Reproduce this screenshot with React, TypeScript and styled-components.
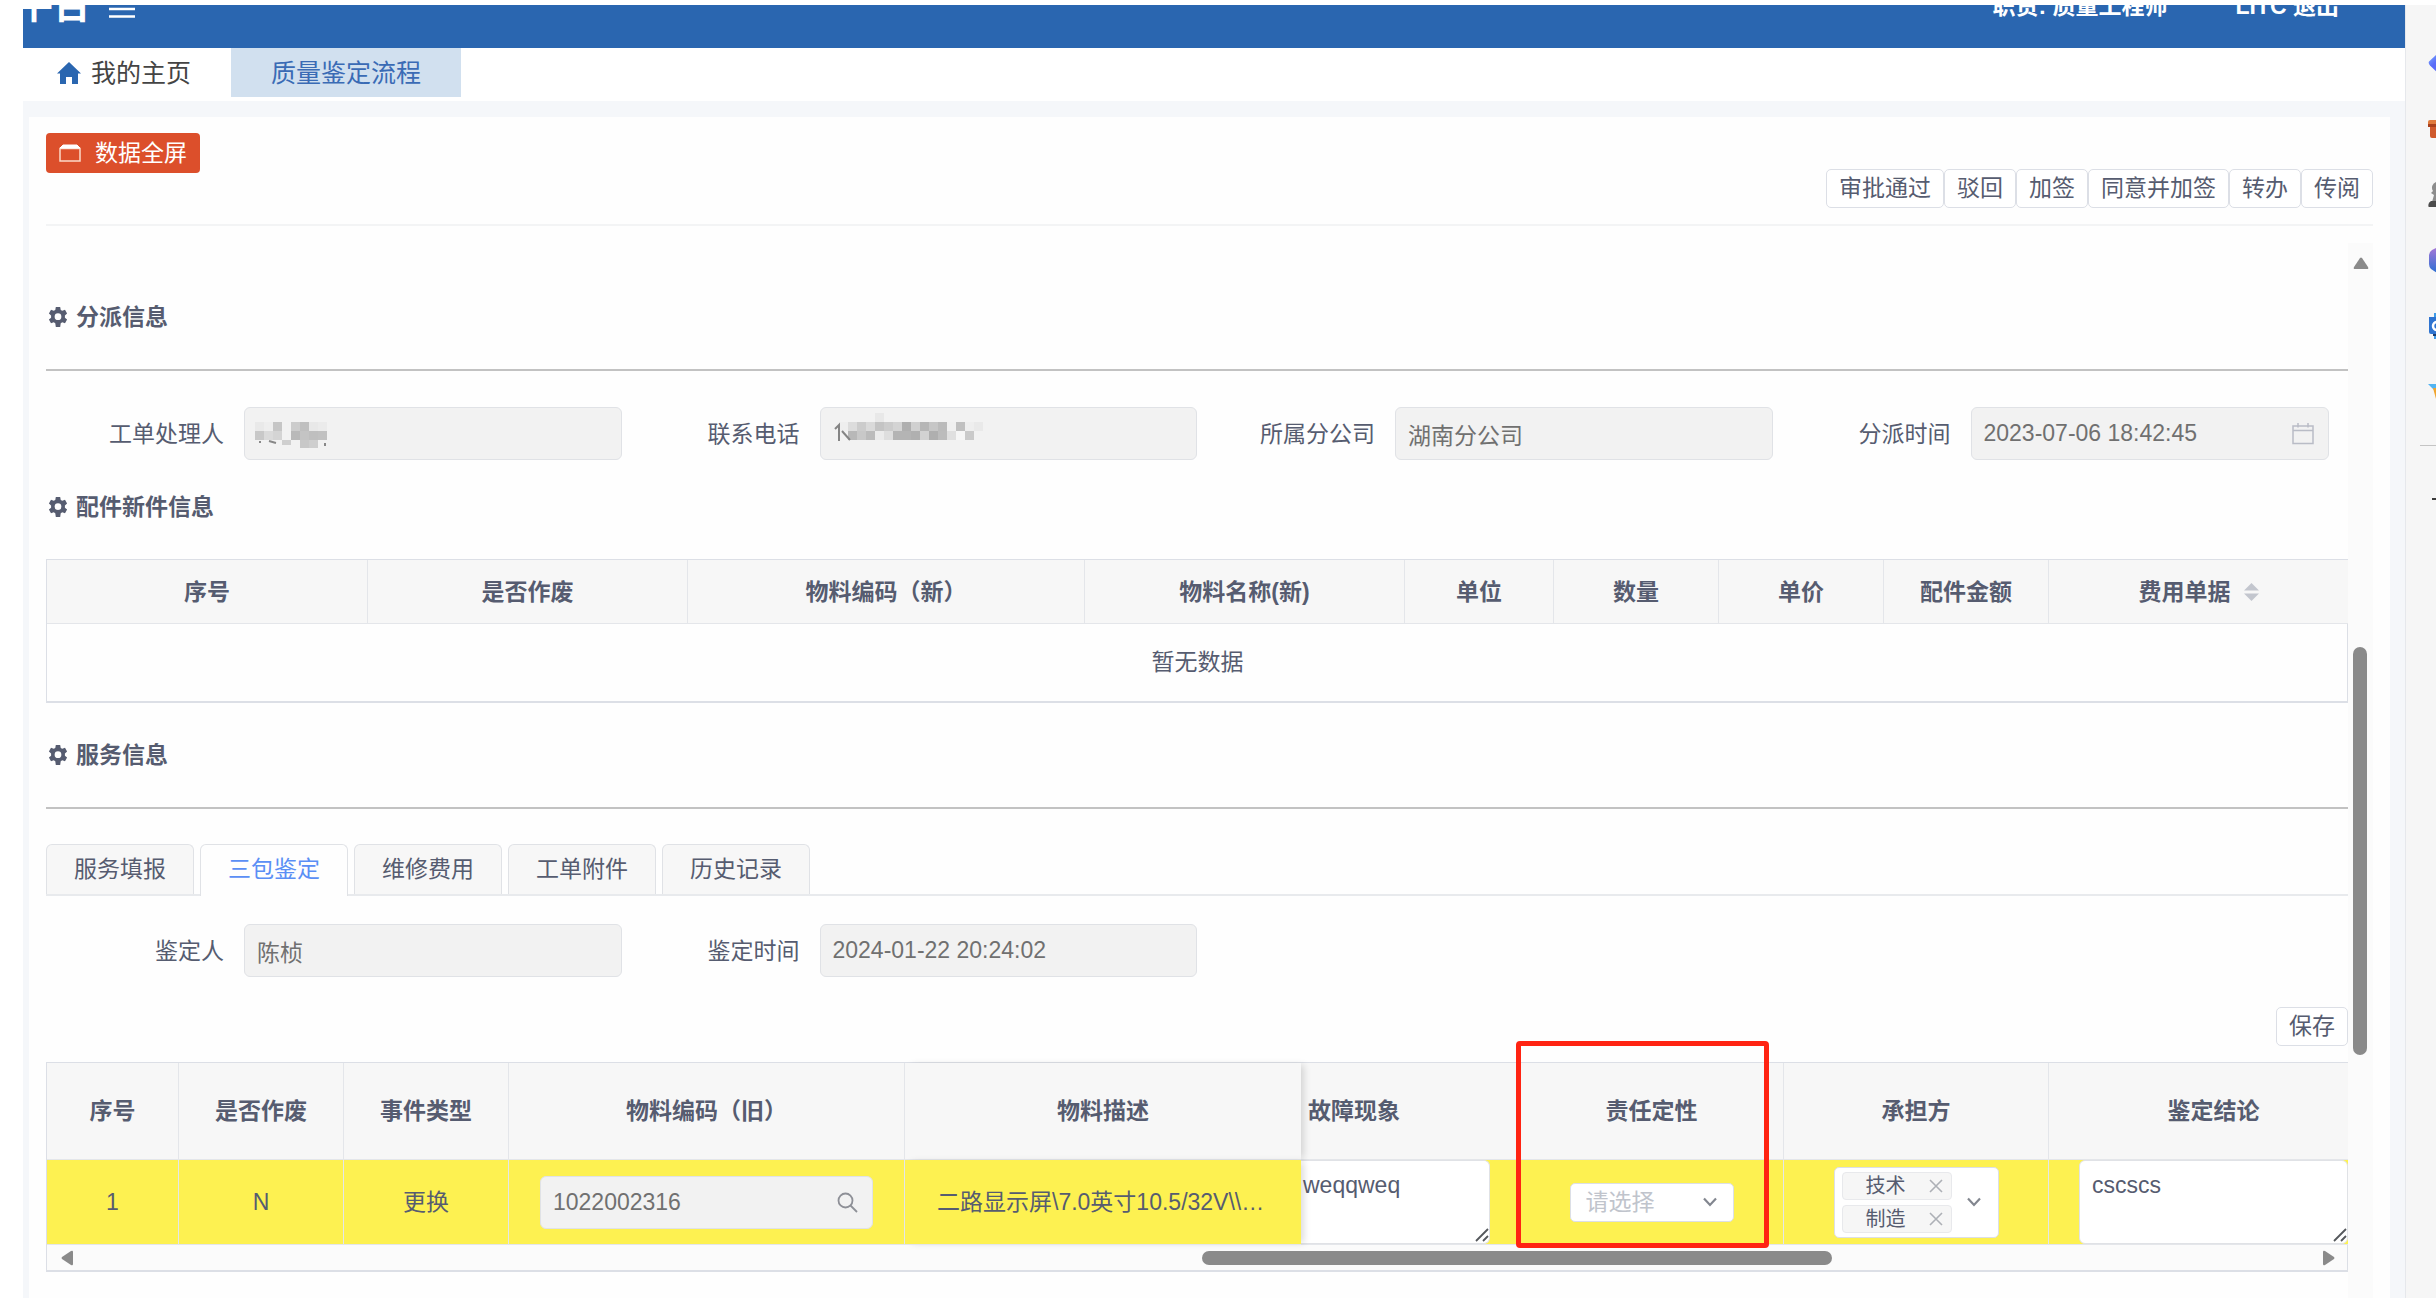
import React, { useState } from 'react';
import styled, { createGlobalStyle, css } from 'styled-components';

const ink = '#565c70';
const line = '#e4e6ea';
const yellow = '#fdf151';

const GlobalStyle = createGlobalStyle`
  * { box-sizing: border-box; }
  body {
    margin: 0;
    background: #fff;
    color: ${ink};
    font-family: "Liberation Sans", "Noto Sans CJK SC", sans-serif;
    font-size: 23px;
    line-height: 32px;
  }
  button, input, select, textarea { font: inherit; color: inherit; margin: 0; }
  button { cursor: pointer; }
`;

/* ---------- frame ---------- */

const Page = styled.div`
  display: flex;
  min-height: 100vh;
  padding: 5px 0 0 23px;
  overflow: hidden;
`;

const Main = styled.div`
  flex: 1;
  min-width: 0;
  display: flex;
  flex-direction: column;
  background: #f5f7fa;
`;

const TopBar = styled.header`
  display: flex;
  justify-content: space-between;
  align-items: flex-end;
  height: 43px;
  padding: 0 66px 20px 0;
  overflow: hidden;
  background: #2a66b0;
  color: #fff;
  font-weight: bold;
`;

const Brand = styled.div`
  display: flex;
  align-items: flex-end;
  gap: 18px;
  margin-left: -8px;
  font-size: 38px;
  line-height: 46px;
`;

const MenuButton = styled.button`
  display: flex;
  padding: 0 0 10px;
  border: 0;
  background: none;
`;

const Account = styled.div`
  display: flex;
  gap: 68px;
  padding-bottom: 6px;
`;

const LogoutLink = styled.a`
  color: #fff;
  text-decoration: none;
`;

const PageTabs = styled.nav`
  display: flex;
  height: 53px;
  padding-bottom: 4px;
  background: #fff;
  font-size: 25px;
`;

const PageTab = styled.a<{ $active?: boolean }>`
  display: flex;
  align-items: center;
  gap: 10px;
  padding: ${p => (p.$active ? '0 40px' : '0 40px 0 34px')};
  background: ${p => (p.$active ? '#d1e0ef' : 'transparent')};
  color: ${p => (p.$active ? '#3a6bb5' : '#444')};
  text-decoration: none;
`;

const Card = styled.main`
  flex: 1;
  margin: 16px 15px 0 6px;
  padding: 16px 17px 0;
  display: flex;
  flex-direction: column;
  background: #fefefe;
`;

const Toolbar = styled.div`
  display: flex;
  justify-content: space-between;
  min-height: 93px;
  padding-bottom: 16px;
  border-bottom: 2px solid #f3f4f5;
`;

const FullscreenButton = styled.button`
  display: flex;
  align-items: center;
  align-self: flex-start;
  gap: 14px;
  height: 40px;
  padding: 0 13px;
  border: 0;
  border-radius: 4px;
  background: #dc4f2b;
  color: #fff;
`;

const Actions = styled.div`
  display: flex;
  align-self: flex-end;
`;

const SmallButton = styled.button`
  height: 39px;
  padding: 0 12px;
  border: 1px solid #dcdfe6;
  border-radius: 5px;
  background: #fff;
  white-space: nowrap;
  line-height: 35px;
`;

/* ---------- scrolling body ---------- */

const Body = styled.div`
  flex: 1;
  display: flex;
  margin-top: 17px;
`;

const Content = styled.div`
  flex: 1;
  min-width: 0;
  padding-top: 58px;
`;

const Rail = styled.div`
  width: 25px;
  padding: 14px 0 0 5px;
  background: #fbfbfb;
`;

const RailThumb = styled.div`
  width: 14px;
  height: 408px;
  margin-top: 378px;
  border-radius: 7px;
  background: #8a8a8a;
`;

const Arrow = styled.svg`
  display: block;
  fill: #8a8a8a;
`;

const SectionTitle = styled.h2`
  display: flex;
  align-items: center;
  gap: 8px;
  margin: 0 0 36px;
  padding-left: 2px;
  font-size: 23px;
  line-height: 32px;
`;

const Rule = styled.hr`
  height: 2px;
  margin: 0;
  border: 0;
  background: #c2c2c2;
`;

const FormRow = styled.div<{ $top: number; $bottom: number }>`
  display: grid;
  grid-template-columns: repeat(4, 1fr);
  margin: ${p => p.$top}px 0 ${p => p.$bottom}px;
`;

const Field = styled.div<{ $inset?: boolean }>`
  display: flex;
  align-items: center;
  padding-right: ${p => (p.$inset ? 19 : 0)}px;
`;

const Label = styled.label`
  width: 198px;
  padding-right: 20px;
  text-align: right;
`;

const InputBox = styled.div`
  position: relative;
  flex: 1;
  min-width: 0;
  height: 53px;
`;

const TextInput = styled.input`
  width: 100%;
  height: 100%;
  padding: 0 12px;
  border: 1px solid #e0e2e6;
  border-radius: 6px;
  background: #f2f2f2;
  color: #707070;
  -webkit-text-fill-color: #707070;
`;

const InputIcon = styled.span`
  position: absolute;
  top: 0;
  bottom: 0;
  right: 15px;
  display: flex;
  align-items: center;
`;

const Mosaic = styled.svg`
  position: absolute;
  left: 10px;
  top: 6px;
`;

/* ---------- tables ---------- */

const TableFrame = styled.div<{ $bottom?: number }>`
  margin-bottom: ${p => p.$bottom || 0}px;
  border: 1px solid #dcdfe6;
  border-bottom-width: 2px;
`;

const Table = styled.table`
  width: 100%;
  table-layout: fixed;
  border-collapse: separate;
  border-spacing: 0;
`;

const cell = css`
  padding: 0;
  border-right: 1px solid ${line};
  border-bottom: 1px solid ${line};
  text-align: center;
  white-space: nowrap;
  &:last-child { border-right: 0; }
`;

const Th = styled.th<{ $tall?: boolean; $clipped?: 'left' | 'right'; $plain?: boolean; $shadow?: boolean }>`
  ${cell}
  position: relative;
  height: ${p => (p.$tall ? 97 : 64)}px;
  background: #f7f7f7;
  ${p => p.$clipped === 'left' && 'text-align: left; padding-left: 7px;'}
  ${p => p.$clipped === 'right' && 'padding-left: 30px;'}
  ${p => p.$plain && 'border-right: 0;'}
  ${p => p.$shadow && 'z-index: 1; box-shadow: 5px 0 7px -2px rgba(0, 0, 0, 0.14);'}
`;

const EmptyTd = styled.td`
  height: 77px;
  padding: 0 0 2px;
  text-align: center;
`;

const Td = styled.td<{ $plain?: boolean; $shadow?: boolean }>`
  ${cell}
  position: relative;
  height: 85px;
  background: ${yellow};
  ${p => p.$plain && 'border-right: 0;'}
  ${p => p.$shadow && 'z-index: 1; box-shadow: 5px 0 7px -2px rgba(0, 0, 0, 0.14);'}
`;

const ThInner = styled.span`
  display: inline-flex;
  align-items: center;
  gap: 13px;
`;

const Ellipsis = styled.div`
  padding: 0 32px;
  overflow: hidden;
  text-overflow: ellipsis;
`;

const CodeBox = styled(InputBox)`
  margin: 0 31px;
`;

const NoteBox = styled.div<{ $side: 'left' | 'right' }>`
  position: relative;
  height: 84px;
  margin: ${p => (p.$side === 'left' ? '0 30px 0 0' : '0 0 0 30px')};
`;

const NoteArea = styled.textarea<{ $side: 'left' | 'right' }>`
  display: block;
  width: 100%;
  height: 100%;
  padding: ${p => (p.$side === 'left' ? '8px 2px' : '8px 12px')};
  border: 1px solid #e0e2e6;
  border-left-width: ${p => (p.$side === 'left' ? 0 : 1)}px;
  border-radius: ${p => (p.$side === 'left' ? '0 6px 6px 0' : '6px')};
  background: #fff;
  overflow: hidden;
  resize: none;
`;

const Grip = styled.svg`
  position: absolute;
  right: 1px;
  bottom: 2px;
  pointer-events: none;
`;

const Highlight = styled.div`
  position: absolute;
  z-index: 3;
  left: -4px;
  top: -22px;
  width: 253px;
  height: 207px;
  border: 5px solid #ff2312;
  border-radius: 4px;
  pointer-events: none;
`;

const SelectBox = styled.div`
  position: relative;
  display: inline-flex;
  vertical-align: middle;
`;

const Select = styled.select`
  width: 164px;
  height: 39px;
  padding: 0 40px 0 15px;
  appearance: none;
  border: 1px solid #dcdfe6;
  border-radius: 5px;
  background: #fff;
  color: #c0c4cc;
  line-height: 33px;
`;

const SelectArrow = styled.span`
  position: absolute;
  right: 17px;
  top: 0;
  bottom: 0;
  display: flex;
  align-items: center;
  pointer-events: none;
`;

const TagBox = styled(SelectBox)`
  flex-direction: column;
  gap: 5px;
  width: 165px;
  padding: 4px 7px;
  border: 1px solid #dcdfe6;
  border-radius: 5px;
  background: #fff;
`;

const Tag = styled.span`
  display: flex;
  align-items: center;
  justify-content: space-between;
  width: 110px;
  height: 28px;
  padding: 0 8px 0 23px;
  border: 1px solid #e8e9ec;
  border-radius: 4px;
  background: #f6f6f6;
  font-size: 20px;
  line-height: 24px;
`;

const TagClose = styled.button`
  display: flex;
  padding: 0;
  border: 0;
  background: none;
`;

const HScroll = styled.div`
  display: flex;
  align-items: center;
  height: 25px;
  padding: 0 12px 0 14px;
  background: #fbfbfb;
`;

const HTrack = styled.div`
  flex: 1;
  display: grid;
  grid-template-columns: 1129fr 630fr 491fr;
`;

const HThumb = styled.div`
  grid-column: 2;
  height: 14px;
  border-radius: 7px;
  background: #8a8a8a;
`;

const SaveRow = styled.div`
  display: flex;
  justify-content: flex-end;
  margin-bottom: 16px;
`;

/* ---------- inner tabs ---------- */

const TabList = styled.div`
  display: flex;
  gap: 6px;
  height: 52px;
  margin-top: 35px;
  border-bottom: 2px solid #e8eaed;
`;

const Tab = styled.button<{ $active: boolean }>`
  height: ${p => (p.$active ? 52 : 50)}px;
  width: 148px;
  padding: 0 0 ${p => (p.$active ? 4 : 2)}px;
  border: 1px solid #e0e2e6;
  border-bottom: 0;
  border-radius: 6px 6px 0 0;
  background: ${p => (p.$active ? '#fefefe' : '#f7f7f7')};
  color: ${p => (p.$active ? '#5b8ff5' : ink)};
`;

/* ---------- browser side bar ---------- */

const SideBar = styled.aside`
  width: 31px;
  padding-top: 44px;
  display: flex;
  flex-direction: column;
  align-items: flex-start;
  gap: 40px;
  overflow: hidden;
  border-left: 1px solid #e6e8ec;
  background: #f6f6f6;
`;

const SideButton = styled.button`
  display: flex;
  margin-left: 22px;
  padding: 0;
  border: 0;
  background: none;
`;

const SideRule = styled.hr`
  width: 30px;
  height: 1px;
  margin: 0 0 0 14px;
  border: 0;
  background: #c4c4c4;
`;

/* ---------- drawings ---------- */

const Gear = () => (
  <svg width="20" height="20" viewBox="0 0 20 22" aria-hidden="true">
    <path
      fill={ink}
      fillRule="evenodd"
      d="M7.6 0h4.8l.6 3.2 1.7 1 3-1.1L20 7.2l-2.4 2.1v2.4l2.4 2.1-2.3 4.1-3-1.1-1.7 1-.6 4.2H7.6L7 17.8l-1.7-1-3 1.1L0 13.8l2.4-2.1V9.3L0 7.2l2.3-4.1 3 1.1 1.7-1zM10 7a3.700 3.700 0 1 0 0 7.400A3.700 3.700 0 0 0 10 7z"
    />
  </svg>
);

const Chevron = () => (
  <svg width="14" height="10" viewBox="0 0 14 10" aria-hidden="true">
    <path d="M1 1.500l6 6.500 6-6.500" fill="none" stroke="#82868f" strokeWidth="2.200" />
  </svg>
);

type Cell = [number, number, string, number?];

const nameCells: Cell[] = [
  [0, 1, '#e9e9e9'], [1, 1, '#eeeeee'], [2, 1, '#c6c6c6'], [4, 1, '#cccccc'], [5, 1, '#bfbfbf'], [6, 1, '#e8e8e8'], [7, 1, '#ebebeb'],
  [0, 2, '#c8c8c8'], [1, 2, '#dadada'], [2, 2, '#d4d4d4'], [4, 2, '#b9b9b9'], [5, 2, '#c4c4c4'], [6, 2, '#bfbfbf'], [7, 2, '#c1c1c1'],
  [3, 3, '#cfcfcf', 5], [5, 3, '#c8c8c8', 8], [6, 3, '#cecece', 8],
];

const phoneCells: Cell[] = [
  [4, 0, '#e8e8e8'],
  ...['#eeeeee', '#dcdcdc', '#cccccc', '#dadada', '#c4c4c4', '#cccccc', '#d4d4d4', '#afafaf', '#d0d0d0', '#b6b6b6', '#c6c6c6', '#bbbbbb', '#f0f0f0', '#c0c0c0', '#eeeeee', '#e9e9e9']
    .map((c, i): Cell => [i, 1, c]),
  ...['#f2f2f2', '#b8b8b8', '#c8c8c8', '#bbbbbb', '#ebebeb', '#dedede', '#b4b4b4', '#b4b4b4', '#b0b0b0', '#d2d2d2', '#afafaf', '#bcbcbc', '#e0e0e0', '#f6f6f6', '#cacaca']
    .map((c, i): Cell => [i, 2, c]),
];

const Mask = ({ cells, phone }: { cells: Cell[]; phone?: boolean }) => (
  <Mosaic width="160" height="40" viewBox="0 0 160 40" aria-hidden="true">
    {cells.map(([x, y, c, h]) => (
      <rect key={`${x}-${y}`} x={(phone ? 9 : 1) + x * 9} y={y * 9} width="9" height={h || 9} fill={c} />
    ))}
    {phone ? (
      <path d="M5 16l4-4v16M12 18l8 9" fill="none" stroke="#858585" strokeWidth="2" />
    ) : (
      <path d="M6 28v2M15 28l7 2M71 30v3" fill="none" stroke="#888" strokeWidth="2" />
    )}
  </Mosaic>
);

const Calendar = () => (
  <svg width="22" height="22" viewBox="0 0 22 22" fill="none" stroke="#b9bcc6" strokeWidth="1.500" aria-hidden="true">
    <path d="M1 3h20v17.500H1zM1 7.500h20M6 0v4.500M16 0v4.500" />
  </svg>
);

const Search = () => (
  <svg width="21" height="21" viewBox="0 0 21 21" fill="none" stroke="#8e9097" strokeWidth="1.800" aria-hidden="true">
    <circle cx="8.500" cy="8.500" r="7" />
    <path d="M13.500 13.500l6.500 6.500" />
  </svg>
);

const Note = ({ side, name, value }: { side: 'left' | 'right'; name: string; value: string }) => (
  <NoteBox $side={side}>
    <NoteArea $side={side} aria-label={name} defaultValue={value} />
    <Grip width="14" height="14" viewBox="0 0 14 14" fill="none" stroke="#55585c" strokeWidth="1.800" aria-hidden="true">
      <path d="M1 13L13 1M8 13l5-5" />
    </Grip>
  </NoteBox>
);

const sideIcons = [
  {
    name: '购物',
    art: <><defs><linearGradient id="gem" x1="0" y1="0" x2="1" y2="1"><stop offset="0" stopColor="#7fb2ff" /><stop offset=".4" stopColor="#5a6cf8" /></linearGradient></defs><path fill="url(#gem)" d="M1 12.500L10 4h12v20H10L2 16.500Q0 14.500 1 12.500z" /></>,
  },
  { name: '工具', art: <><path fill="#e07a3c" d="M0 7q0-2 2-2h22v7H0z" /><path fill="#a8401c" d="M0 9h24v3H0z" /><path fill="#cf5a2d" d="M2 12h22v11H4q-2 0-2-2z" /></> },
  { name: '游戏', art: <><path fill="#8d8d8d" d="M8 1a6 6 0 0 0-3 9l-2 2 3 2-2 7h20V1z" /><path fill="#4c4c4c" d="M3 20h21v7H1q-2-5 2-7z" /></> },
  {
    name: '办公',
    art: <><defs><linearGradient id="hex" x1="0" y1="0" x2="0" y2="1"><stop offset="0" stopColor="#a878d8" /><stop offset="1" stopColor="#2b6fd2" /></linearGradient></defs><path fill="url(#hex)" d="M1 8q0-3 3-5l6-3h14v26H9l-6-4q-2-2-2-5z" /></>,
  },
  { name: '邮箱', art: <><path fill="#3f9be8" d="M6 0h18v26H6z" /><path fill="#1b3a6b" d="M5 21h19v2H5z" /><path fill="#2f74d0" d="M1 4h23v17H3q-2 0-2-2z" /><circle cx="9" cy="13" r="4" fill="none" stroke="#fff" strokeWidth="2.500" /></> },
  { name: '收藏', art: <><path fill="#52b4f2" d="M0 5h24v6H6z" /><path fill="#f0a52f" d="M5 9h19v11H8z" /></> },
];

/* ---------- data ---------- */

const partCols: [string, number][] = [
  ['序号', 321], ['是否作废', 320], ['物料编码（新）', 397], ['物料名称(新)', 320], ['单位', 149],
  ['数量', 165], ['单价', 165], ['配件金额', 165], ['费用单据', 299],
];

const reviewWidths = [132, 165, 165, 396, 396, 219, 264, 265, 299];

const serviceTabs = ['服务填报', '三包鉴定', '维修费用', '工单附件', '历史记录'];

export default function App() {
  const [tab, setTab] = useState(1);
  const [tags, setTags] = useState(['技术', '制造']);

  return (
    <>
      <GlobalStyle />
      <Page>
        <Main>
          <TopBar>
            <Brand>
              <span>平台</span>
              <MenuButton aria-label="菜单">
                <svg width="26" height="20" viewBox="0 0 26 20" stroke="#fff" strokeWidth="2.500" aria-hidden="true">
                  <path d="M0 3h26M0 11h26M0 18.500h26" />
                </svg>
              </MenuButton>
            </Brand>
            <Account>
              <span>职责: 质量工程师</span>
              <LogoutLink href="#logout">LITC 退出</LogoutLink>
            </Account>
          </TopBar>

          <PageTabs>
            <PageTab href="#home">
              <svg width="24" height="22" viewBox="0 0 24 22" aria-hidden="true">
                <path fill="#2a66b0" d="M12 0l12 11.500h-3V22h-6v-7H9v7H3V11.500H0z" />
              </svg>
              我的主页
            </PageTab>
            <PageTab href="#quality" $active>质量鉴定流程</PageTab>
          </PageTabs>

          <Card>
            <Toolbar>
              <FullscreenButton>
                <svg width="22" height="18" viewBox="0 0 22 18" fill="none" stroke="#fbd9c8" strokeWidth="1.500" aria-hidden="true">
                  <path d="M1 4.500h20V17H1z" />
                  <path d="M1 4l3-3h14l3 3z" fill="#fff" stroke="#fff" strokeWidth="1" />
                </svg>
                数据全屏
              </FullscreenButton>
              <Actions>
                {['审批通过', '驳回', '加签', '同意并加签', '转办', '传阅'].map(t => (
                  <SmallButton key={t}>{t}</SmallButton>
                ))}
              </Actions>
            </Toolbar>

            <Body>
              <Content>
                <SectionTitle><Gear />分派信息</SectionTitle>
                <Rule />
                <FormRow $top={36} $bottom={31}>
                  <Field>
                    <Label htmlFor="handler">工单处理人</Label>
                    <InputBox><TextInput id="handler" disabled /><Mask cells={nameCells} /></InputBox>
                  </Field>
                  <Field>
                    <Label htmlFor="phone">联系电话</Label>
                    <InputBox><TextInput id="phone" disabled /><Mask cells={phoneCells} phone /></InputBox>
                  </Field>
                  <Field>
                    <Label htmlFor="branch">所属分公司</Label>
                    <InputBox><TextInput id="branch" disabled defaultValue="湖南分公司" /></InputBox>
                  </Field>
                  <Field $inset>
                    <Label htmlFor="assigned">分派时间</Label>
                    <InputBox>
                      <TextInput id="assigned" disabled defaultValue="2023-07-06 18:42:45" />
                      <InputIcon><Calendar /></InputIcon>
                    </InputBox>
                  </Field>
                </FormRow>

                <SectionTitle><Gear />配件新件信息</SectionTitle>
                <TableFrame $bottom={36}>
                  <Table>
                    <colgroup>{partCols.map(([n, w]) => <col key={n} width={w} />)}</colgroup>
                    <thead>
                      <tr>
                        {partCols.map(([n], i) => (
                          <Th key={n}>
                            {i === partCols.length - 1 ? (
                              <ThInner>
                                {n}
                                <svg width="15" height="18" viewBox="0 0 15 18" fill="#c3c6ce" aria-hidden="true">
                                  <path d="M0 7.500L7.500 0 15 7.500zM0 10.500h15L7.500 18z" />
                                </svg>
                              </ThInner>
                            ) : n}
                          </Th>
                        ))}
                      </tr>
                    </thead>
                    <tbody><tr><EmptyTd colSpan={9}>暂无数据</EmptyTd></tr></tbody>
                  </Table>
                </TableFrame>

                <SectionTitle><Gear />服务信息</SectionTitle>
                <Rule />
                <TabList role="tablist">
                  {serviceTabs.map((t, i) => (
                    <Tab key={t} role="tab" aria-selected={i === tab} $active={i === tab} onClick={() => setTab(i)}>{t}</Tab>
                  ))}
                </TabList>
                <FormRow $top={28} $bottom={30}>
                  <Field>
                    <Label htmlFor="reviewer">鉴定人</Label>
                    <InputBox><TextInput id="reviewer" disabled defaultValue="陈桢" /></InputBox>
                  </Field>
                  <Field>
                    <Label htmlFor="reviewed">鉴定时间</Label>
                    <InputBox><TextInput id="reviewed" disabled defaultValue="2024-01-22 20:24:02" /></InputBox>
                  </Field>
                </FormRow>
                <SaveRow><SmallButton>保存</SmallButton></SaveRow>

                <TableFrame>
                  <Table>
                    <colgroup>{reviewWidths.map((w, i) => <col key={i} width={w} />)}</colgroup>
                    <thead>
                      <tr>
                        <Th $tall>序号</Th>
                        <Th $tall>是否作废</Th>
                        <Th $tall>事件类型</Th>
                        <Th $tall>物料编码（旧）</Th>
                        <Th $tall $plain $shadow>物料描述</Th>
                        <Th $tall $plain $clipped="left">故障现象</Th>
                        <Th $tall>责任定性<Highlight /></Th>
                        <Th $tall>承担方</Th>
                        <Th $tall $clipped="right">鉴定结论</Th>
                      </tr>
                    </thead>
                    <tbody>
                      <tr>
                        <Td>1</Td>
                        <Td>N</Td>
                        <Td>更换</Td>
                        <Td>
                          <CodeBox>
                            <TextInput aria-label="物料编码（旧）" disabled defaultValue="1022002316" />
                            <InputIcon><Search /></InputIcon>
                          </CodeBox>
                        </Td>
                        <Td $plain $shadow><Ellipsis>二路显示屏\7.0英寸10.5/32V\\车载终端</Ellipsis></Td>
                        <Td $plain><Note side="left" name="故障现象" value="weqqweq" /></Td>
                        <Td>
                          <SelectBox>
                            <Select aria-label="责任定性"><option>请选择</option></Select>
                            <SelectArrow><Chevron /></SelectArrow>
                          </SelectBox>
                        </Td>
                        <Td>
                          <TagBox role="group" aria-label="承担方">
                            {tags.map(t => (
                              <Tag key={t}>
                                {t}
                                <TagClose aria-label={`移除${t}`} onClick={() => setTags(tags.filter(x => x !== t))}>
                                  <svg width="14" height="14" viewBox="0 0 14 14" stroke="#adb0b6" strokeWidth="1.600" aria-hidden="true">
                                    <path d="M1 1l12 12M13 1L1 13" />
                                  </svg>
                                </TagClose>
                              </Tag>
                            ))}
                            <SelectArrow><Chevron /></SelectArrow>
                          </TagBox>
                        </Td>
                        <Td><Note side="right" name="鉴定结论" value="cscscs" /></Td>
                      </tr>
                    </tbody>
                  </Table>
                  <HScroll>
                    <Arrow width="12" height="16" viewBox="0 0 12 16"><path d="M12 2v12q0 2-2 1L1 9q-1-1 0-2l9-6q2-1 2 1z" /></Arrow>
                    <HTrack><HThumb /></HTrack>
                    <Arrow width="12" height="16" viewBox="0 0 12 16"><path d="M0 2v12q0 2 2 1l9-6q1-1 0-2L2 1Q0 0 0 2z" /></Arrow>
                  </HScroll>
                </TableFrame>
              </Content>
              <Rail>
                <Arrow width="16" height="12" viewBox="0 0 16 12"><path d="M2 12h12q2 0 1-2L9 1Q8 0 7 1l-6 9q-1 2 1 2z" /></Arrow>
                <RailThumb />
              </Rail>
            </Body>
          </Card>
        </Main>

        <SideBar>
          {sideIcons.map(({ name, art }) => (
            <SideButton key={name} aria-label={name}>
              <svg width="26" height="26" viewBox="0 0 26 26" aria-hidden="true">{art}</svg>
            </SideButton>
          ))}
          <SideRule />
          <SideButton aria-label="添加">
            <svg width="26" height="26" viewBox="0 0 26 26" stroke="#3c3c3c" strokeWidth="2" aria-hidden="true">
              <path d="M4 13h18M13 4v18" />
            </svg>
          </SideButton>
        </SideBar>
      </Page>
    </>
  );
}
